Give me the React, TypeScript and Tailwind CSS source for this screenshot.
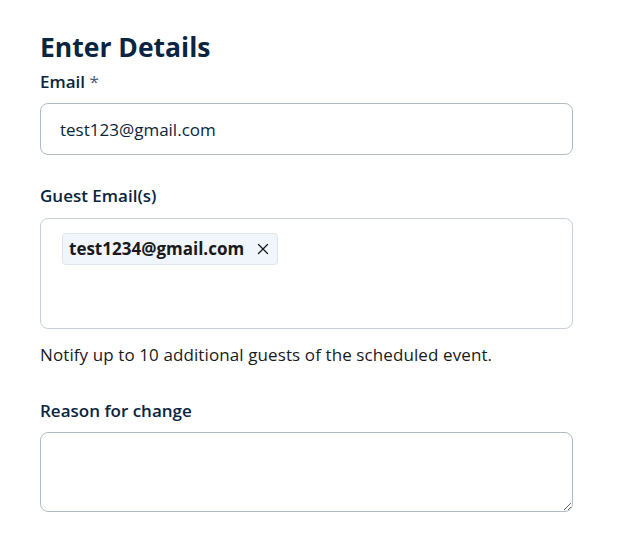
import React from 'react';

const font = { fontFamily: '"Open Sans", Lato, sans-serif' };

export default function App() {
  return (
    <div className="min-h-screen bg-white pl-[40px] pr-[45px] pt-[31px]" style={font}>
      <h1 className="text-[26.5px] leading-[32px] font-bold text-[#0a2540]">Enter Details</h1>

      <label className="mt-[7px] block text-[17px] leading-[24px] font-semibold text-[#0a2540]">
        Email <span className="font-normal text-[#4b5a6e]">*</span>
      </label>
      <input
        className="mt-[9px] block h-[52px] w-[533px] rounded-[8px] border border-[#b2bbc6] px-[19px] text-[17px] text-[#0a2540] outline-none"
        defaultValue="test123@gmail.com"
        style={font}
      />

      <label className="mt-[29px] block text-[17px] leading-[24px] font-semibold text-[#0a2540]">
        Guest Email(s)
      </label>
      <div className="mt-[10px] h-[111px] w-[533px] rounded-[8px] border border-[#c9cfd7] px-[21px] pt-[14px]">
        <span className="inline-flex h-[32px] items-center gap-[13px] rounded-[4px] border border-[#dfe5ef] bg-[#f1f5fc] pl-[6px] pr-[8px] text-[17px] font-bold text-[#1a1a1a]">
          test1234@gmail.com
          <svg width="12" height="12" viewBox="0 0 12 12" fill="none" stroke="#1a1a1a" strokeWidth="1.3" strokeLinecap="round">
            <path d="M1.5 1.5l9 9M10.5 1.5l-9 9" />
          </svg>
        </span>
      </div>

      <p className="mt-[14px] text-[17px] leading-[24px] tracking-[0.1px] text-[#1a1a1a]">
        Notify up to 10 additional guests of the scheduled event.
      </p>

      <label className="mt-[32px] block text-[17px] leading-[24px] font-semibold text-[#0a2540]">
        Reason for change
      </label>
      <textarea
        className="mt-[9px] block h-[80px] w-[533px] resize-y rounded-[8px] border border-[#b2bbc6] px-[19px] py-[12px] text-[17px] outline-none"
        style={font}
      />
    </div>
  );
}
